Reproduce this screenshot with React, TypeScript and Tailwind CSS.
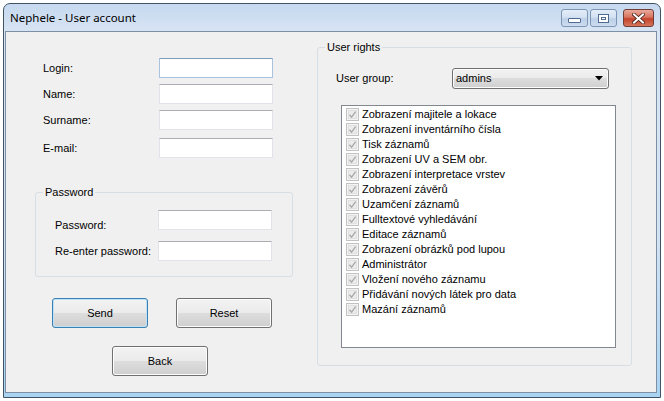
import React from 'react';

const rights = [
    'Zobrazení majitele a lokace',
    'Zobrazení inventárního čísla',
    'Tisk záznamů',
    'Zobrazení UV a SEM obr.',
    'Zobrazení interpretace vrstev',
    'Zobrazení závěrů',
    'Uzamčení záznamů',
    'Fulltextové vyhledávání',
    'Editace záznamů',
    'Zobrazení obrázků pod lupou',
    'Administrátor',
    'Vložení nového záznamu',
    'Přidávání nových látek pro data',
    'Mazání záznamů',
];

const TextBox = ({ focused = false }: { focused?: boolean }) => (
    <div
        className={
            focused
                ? 'w-[114px] h-[20px] bg-white border border-[#a9c3df] border-t-[#7f9db9]'
                : 'w-[114px] h-[20px] bg-white border border-[#e2e3ea] border-t-[#abadb3]'
        }
    />
);

const Button = ({ label, isDefault = false }: { label: string; isDefault?: boolean }) => (
    <div
        className={
            'w-[96px] h-[30px] rounded-[3px] border flex items-center justify-center bg-[linear-gradient(#f2f2f2_0%,#ebebeb_49%,#dddddd_50%,#cfcfcf_100%)] ' +
            (isDefault
                ? 'border-[#3c7fb1] shadow-[inset_0_0_0_1px_#b9e3f9]'
                : 'border-[#707070] shadow-[inset_0_0_0_1px_#fcfcfc]')
        }
    >
        {label}
    </div>
);

const CheckBox = () => (
    <svg width="13" height="13" viewBox="0 0 13 13" className="shrink-0">
        <rect x="0.5" y="0.5" width="12" height="12" fill="#f4f4f4" stroke="#c2c2c2" />
        <rect x="2.5" y="2.5" width="8" height="8" fill="#ececec" stroke="#e0e0e0" />
        <path d="M3.5 6.8 L5.6 9.2 L9.6 3.6" fill="none" stroke="#a8a8a8" strokeWidth="1.3" />
    </svg>
);

const CaptionButton = ({ kind }: { kind: 'min' | 'max' | 'close' }) => {
    if (kind === 'close') {
        return (
            <div className="w-[31px] h-[18px] rounded-[3px] border border-[#6f3d37] flex items-center justify-center bg-[linear-gradient(#e9a99c_0%,#d8735f_45%,#c4432c_55%,#d6755c_100%)]">
                <svg width="13" height="11" viewBox="0 0 13 11">
                    <path d="M2 1.5 L11 9.5 M11 1.5 L2 9.5" stroke="#4a1f19" strokeWidth="3.6" strokeLinecap="square" />
                    <path d="M2 1.5 L11 9.5 M11 1.5 L2 9.5" stroke="#ffffff" strokeWidth="2" strokeLinecap="square" />
                </svg>
            </div>
        );
    }
    return (
        <div className="w-[27px] h-[18px] rounded-[3px] border border-[#7c95b3] flex items-center justify-center bg-[linear-gradient(#e4edf8_0%,#d3e1f2_45%,#bcd0e8_55%,#cddcef_100%)]">
            {kind === 'min' ? (
                <div className="w-[13px] h-[5px] mt-[4px] bg-white border border-[#4f6b8f] rounded-[1px]" />
            ) : (
                <div className="w-[11px] h-[9px] bg-white border border-[#4f6b8f] flex items-center justify-center">
                    <div className="w-[5px] h-[3px] border border-[#4f6b8f]" />
                </div>
            )}
        </div>
    );
};

export default function App() {
    return (
        <div
            className="w-[664px] h-[401px] bg-white overflow-hidden text-[11px] text-black leading-[13px]"
            style={{ fontFamily: '"Liberation Sans", Arial, sans-serif' }}
        >
            <div className="ml-[3px] mt-[3px] w-[658px] h-[395px] rounded-t-[7px] border border-[#435366] flex flex-col bg-[linear-gradient(#c6d9ef_0%,#d9e5f4_8%,#d2e2f3_60%,#a9d4f1_100%)]">
                <div className="h-[27px] shrink-0 flex items-center pl-[6px] pr-[6px]">
                    <span
                        className="text-[11.5px] text-black"
                        style={{ fontFamily: '"Noto Sans", "Open Sans", sans-serif' }}
                    >
                        Nephele - User account
                    </span>
                    <div className="ml-auto flex items-center gap-[2px] mt-[1px]">
                        <CaptionButton kind="min" />
                        <CaptionButton kind="max" />
                        <div className="w-[2px]" />
                        <CaptionButton kind="close" />
                    </div>
                </div>

                <div className="flex-1 ml-[1px] mr-[3px] mb-[4px] border border-[#7d8fa4] bg-[#f0f0f0] flex">
                    {/* left column */}
                    <div className="w-[311px] shrink-0 flex flex-col">
                        <div className="mt-[26px] ml-[37px] flex flex-col">
                            <div className="flex items-center h-[20px]">
                                <span className="w-[116px]">Login:</span>
                                <TextBox focused />
                            </div>
                            <div className="flex items-center h-[20px] mt-[6px]">
                                <span className="w-[116px]">Name:</span>
                                <TextBox />
                            </div>
                            <div className="flex items-center h-[20px] mt-[6px]">
                                <span className="w-[116px]">Surname:</span>
                                <TextBox />
                            </div>
                            <div className="flex items-center h-[20px] mt-[8px]">
                                <span className="w-[116px]">E-mail:</span>
                                <TextBox />
                            </div>
                        </div>

                        <fieldset className="mt-[28px] ml-[29px] w-[258px] border border-[#d5dfe5] rounded-[3px] pl-[19px] pb-[15px]">
                            <legend className="ml-[-12px] px-[2px]">Password</legend>
                            <div className="flex items-center h-[20px] mt-[11px]">
                                <span className="w-[103px] pt-[10px]">Password:</span>
                                <TextBox />
                            </div>
                            <div className="flex items-center h-[20px] mt-[11px]">
                                <span className="w-[103px]">Re-enter password:</span>
                                <TextBox />
                            </div>
                        </fieldset>

                        <div className="mt-[21px] ml-[46px] flex gap-[28px]">
                            <Button label="Send" isDefault />
                            <Button label="Reset" />
                        </div>
                        <div className="mt-[18px] ml-[106px]">
                            <Button label="Back" />
                        </div>
                    </div>

                    {/* right column */}
                    <fieldset className="mt-[9px] w-[315px] h-[325px] border border-[#d5dfe5] rounded-[3px] pl-[18px]">
                        <legend className="ml-[-11px] px-[2px]">User rights</legend>
                        <div className="flex items-center mt-[14px]">
                            <span className="w-[116px]">User group:</span>
                            <div className="w-[157px] h-[21px] rounded-[3px] border border-[#707070] flex items-center pl-[3px] pr-[5px] bg-[linear-gradient(#f2f2f2_0%,#ebebeb_49%,#dddddd_50%,#cfcfcf_100%)] shadow-[inset_0_0_0_1px_#fcfcfc]">
                                <span>admins</span>
                                <svg width="8" height="5" viewBox="0 0 8 5" className="ml-auto">
                                    <path d="M0 0 H8 L4 4.5 Z" fill="#000" />
                                </svg>
                            </div>
                        </div>
                        <div className="mt-[16px] ml-[5px] w-[275px] h-[243px] bg-white border border-[#828790] pt-[1px] pl-[4px] flex flex-col">
                            {rights.map((r) => (
                                <div key={r} className="h-[15px] flex items-center gap-[3px]">
                                    <CheckBox />
                                    <span>{r}</span>
                                </div>
                            ))}
                        </div>
                    </fieldset>
                </div>
            </div>
        </div>
    );
}
